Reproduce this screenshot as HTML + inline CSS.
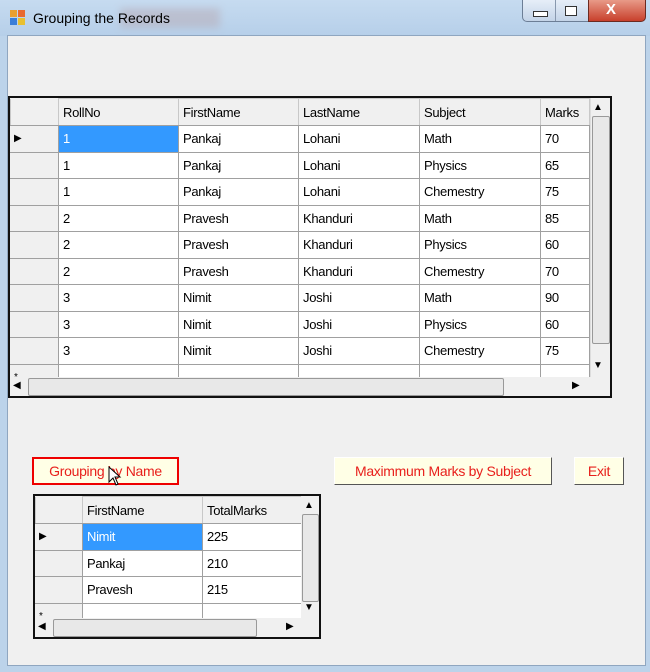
<html><head><style>
body{margin:0;width:650px;height:672px;overflow:hidden;background:#bcd3ea;font-family:"Liberation Sans",sans-serif;position:relative}
.a{position:absolute}
table{border-collapse:collapse;table-layout:fixed;font-size:13px;color:#000}
td{border:1px solid #a0a0a0;padding:0 0 0 4px;background:#fff;white-space:nowrap;overflow:hidden;letter-spacing:-0.3px}
tr.h td{background:#f0f0f0;border-color:#c8c8c8 #c8c8c8 #a0a0a0 #c8c8c8}
td.r{background:#f0f0f0;border-color:#a0a0a0 #a0a0a0 #a0a0a0 #f0f0f0;font-size:10px;padding-left:3px}
td.s{background:#3399ff;color:#fff}
.btn{position:absolute;height:26px;background:#ffffe6;border:1px solid #fff;border-right-color:#555;border-bottom-color:#555;color:#e8201c;font-size:14px;text-align:center;line-height:26px;letter-spacing:-0.3px}
.sb{background:#f0f0f0;position:absolute}
</style></head><body>
<div class="a" style="left:0;top:0;width:650px;height:36px;background:linear-gradient(#c6dbf0,#b6cfe9)"></div>
<div class="a" style="left:120px;top:8px;width:100px;height:20px;background:#b59fa6;opacity:.4;filter:blur(4px)"></div>
<div class="a" style="left:10px;top:10px;width:7px;height:7px;background:#e8a030"></div>
<div class="a" style="left:18px;top:10px;width:7px;height:7px;background:#e86a30"></div>
<div class="a" style="left:10px;top:18px;width:7px;height:7px;background:#3a7ed8"></div>
<div class="a" style="left:18px;top:18px;width:7px;height:7px;background:#e8c030"></div>
<div class="a" style="left:33px;top:10px;font-size:14px;color:#000">Grouping the Records</div>
<div class="a" style="left:522px;top:0;width:66px;height:21px;border:1px solid #6c7e96;border-top:0;border-radius:0 0 0 5px;background:linear-gradient(#e6eef8,#c4d4e8)"></div>
<div class="a" style="left:555px;top:0;width:1px;height:21px;background:#8898ae"></div>
<div class="a" style="left:533px;top:11px;width:13px;height:4px;border:1px solid #333;background:#fff"></div>
<div class="a" style="left:565px;top:6px;width:10px;height:8px;border:1px solid #333;background:#fff"></div>
<div class="a" style="left:588px;top:0;width:56px;height:21px;border:1px solid #6c2a20;border-top:0;border-radius:0 0 5px 0;background:linear-gradient(#e89a88,#c8402c)"></div>
<div class="a" style="left:606px;top:1px;font-size:15px;font-weight:bold;color:#fff">X</div>
<div class="a" style="left:7px;top:35px;width:637px;height:629px;background:#f0f0f0;border:1px solid #8fa6c0"></div>

<div class="a" style="left:8px;top:96px;width:600px;height:298px;border:2px solid #111;background:#fff;overflow:hidden">
<table style="width:579px">
<colgroup><col style="width:48px"><col style="width:120px"><col style="width:120px"><col style="width:121px"><col style="width:121px"><col style="width:49px"></colgroup>
<tr class="h" style="height:27px"><td class="r" style="border-top-color:#f0f0f0"></td><td>RollNo</td><td>FirstName</td><td>LastName</td><td>Subject</td><td>Marks</td></tr>
<tr style="height:26.5px"><td class="r">▶</td><td class="s">1</td><td>Pankaj</td><td>Lohani</td><td>Math</td><td>70</td></tr>
<tr style="height:26.5px"><td class="r"></td><td>1</td><td>Pankaj</td><td>Lohani</td><td>Physics</td><td>65</td></tr>
<tr style="height:26.5px"><td class="r"></td><td>1</td><td>Pankaj</td><td>Lohani</td><td>Chemestry</td><td>75</td></tr>
<tr style="height:26.5px"><td class="r"></td><td>2</td><td>Pravesh</td><td>Khanduri</td><td>Math</td><td>85</td></tr>
<tr style="height:26.5px"><td class="r"></td><td>2</td><td>Pravesh</td><td>Khanduri</td><td>Physics</td><td>60</td></tr>
<tr style="height:26.5px"><td class="r"></td><td>2</td><td>Pravesh</td><td>Khanduri</td><td>Chemestry</td><td>70</td></tr>
<tr style="height:26.5px"><td class="r"></td><td>3</td><td>Nimit</td><td>Joshi</td><td>Math</td><td>90</td></tr>
<tr style="height:26.5px"><td class="r"></td><td>3</td><td>Nimit</td><td>Joshi</td><td>Physics</td><td>60</td></tr>
<tr style="height:26.5px"><td class="r"></td><td>3</td><td>Nimit</td><td>Joshi</td><td>Chemestry</td><td>75</td></tr>
<tr style="height:26.5px"><td class="r">*</td><td></td><td></td><td></td><td></td><td></td></tr>
</table>
<div class="sb" style="left:580px;top:0;width:20px;height:280px;border-left:1px solid #ddd"></div>
<div class="a" style="left:583px;top:4px;font-size:10px">▲</div>
<div class="a" style="left:582px;top:18px;width:16px;height:226px;background:#e8e8e8;border:1px solid #999;border-radius:2px"></div>
<div class="a" style="left:583px;top:262px;font-size:10px">▼</div>
<div class="sb" style="left:0;top:279px;width:600px;height:19px"></div>
<div class="a" style="left:3px;top:282px;font-size:10px">◀</div>
<div class="a" style="left:18px;top:280px;width:474px;height:16px;background:#e8e8e8;border:1px solid #999;border-radius:2px"></div>
<div class="a" style="left:562px;top:282px;font-size:10px">▶</div>
</div>

<div class="btn" style="left:32px;top:457px;width:143px;border:2px solid #e00;height:24px;line-height:24px">Grouping by Name</div>
<div class="btn" style="left:334px;top:457px;width:216px">Maximmum Marks by Subject</div>
<div class="btn" style="left:574px;top:457px;width:48px">Exit</div>
<svg class="a" style="left:108px;top:466px" width="14" height="22" viewBox="0 0 14 22"><path d="M1 1 L1 16 L5 12 L8 19 L10 18 L7 11 L12 11 Z" fill="#fff" stroke="#000"/></svg>

<div class="a" style="left:33px;top:494px;width:284px;height:141px;border:2px solid #111;background:#fff;overflow:hidden">
<table style="width:268px">
<colgroup><col style="width:47px"><col style="width:120px"><col style="width:101px"></colgroup>
<tr class="h" style="height:27px"><td class="r" style="border-top-color:#f0f0f0"></td><td>FirstName</td><td>TotalMarks</td></tr>
<tr style="height:26.5px"><td class="r">▶</td><td class="s">Nimit</td><td>225</td></tr>
<tr style="height:26.5px"><td class="r"></td><td>Pankaj</td><td>210</td></tr>
<tr style="height:26.5px"><td class="r"></td><td>Pravesh</td><td>215</td></tr>
<tr style="height:26.5px"><td class="r">*</td><td></td><td></td></tr>
</table>
<div class="sb" style="left:266px;top:0;width:18px;height:123px"></div>
<div class="a" style="left:269px;top:4px;font-size:10px">▲</div>
<div class="a" style="left:267px;top:18px;width:15px;height:86px;background:#e8e8e8;border:1px solid #999;border-radius:2px"></div>
<div class="a" style="left:269px;top:106px;font-size:10px">▼</div>
<div class="sb" style="left:0;top:122px;width:284px;height:19px"></div>
<div class="a" style="left:3px;top:125px;font-size:10px">◀</div>
<div class="a" style="left:18px;top:123px;width:202px;height:16px;background:#e8e8e8;border:1px solid #999;border-radius:2px"></div>
<div class="a" style="left:251px;top:125px;font-size:10px">▶</div>
</div>
</body></html>
